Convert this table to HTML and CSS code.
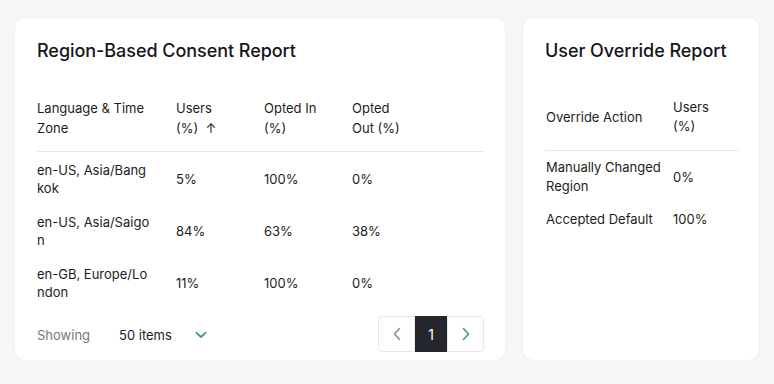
FILE: index.html
```html
<!DOCTYPE html>
<html lang="en">
<head>
<meta charset="utf-8">
<title>Reports</title>
<link rel="stylesheet" href="styles.css">
</head>
<body>
<div class="page">
  <section class="card card-main">
    <h2 class="card-title">Region-Based Consent Report</h2>
    <table class="report report-main">
      <colgroup>
        <col class="c1"><col class="c2"><col class="c3"><col class="c4">
      </colgroup>
      <thead>
        <tr>
          <th><div class="th-wide">Language &amp; Time Zone</div></th>
          <th><div class="th-narrow">Users (%)&nbsp; ↑</div></th>
          <th><div class="th-narrow">Opted In (%)</div></th>
          <th><div class="th-narrow">Opted Out (%)</div></th>
        </tr>
      </thead>
      <tbody>
        <tr><td>en-US, Asia/Bangkok</td><td>5%</td><td>100%</td><td>0%</td></tr>
        <tr><td>en-US, Asia/Saigon</td><td>84%</td><td>63%</td><td>38%</td></tr>
        <tr><td>en-GB, Europe/London</td><td>11%</td><td>100%</td><td>0%</td></tr>
      </tbody>
    </table>
    <div class="footer">
      <div class="showing">
        <span class="showing-label">Showing</span>
        <span class="showing-value">50 items</span>
        <svg class="chev-down" width="12" height="8" viewBox="0 0 12 8"><path d="M1.5 1.8 L6 6 L10.5 1.8" fill="none" stroke="#3c9b79" stroke-width="1.8" stroke-linecap="round" stroke-linejoin="round"/></svg>
      </div>
      <div class="pager">
        <button class="pg pg-prev" aria-label="Previous"><svg width="8" height="14" viewBox="0 0 8 14"><path d="M6.5 1.5 L1.5 7 L6.5 12.5" fill="none" stroke="#8a8d93" stroke-width="1.6" stroke-linecap="round" stroke-linejoin="round"/></svg></button>
        <button class="pg pg-active">1</button>
        <button class="pg pg-next" aria-label="Next"><svg width="8" height="14" viewBox="0 0 8 14"><path d="M1.5 1.5 L6.5 7 L1.5 12.5" fill="none" stroke="#3c9b79" stroke-width="1.6" stroke-linecap="round" stroke-linejoin="round"/></svg></button>
      </div>
    </div>
  </section>
  <section class="card card-side">
    <h2 class="card-title">User Override Report</h2>
    <table class="report report-side">
      <colgroup>
        <col class="s1"><col class="s2">
      </colgroup>
      <thead>
        <tr><th>Override Action</th><th>Users (%)</th></tr>
      </thead>
      <tbody>
        <tr><td>Manually Changed Region</td><td>0%</td></tr>
        <tr><td>Accepted Default</td><td>100%</td></tr>
      </tbody>
    </table>
  </section>
</div>
</body>
</html>
```

FILE: styles.css
```css
* { box-sizing: border-box; }
html, body { margin: 0; padding: 0; }
body {
  background: #f5f6f8;
  font-family: Inter, "Noto Sans", sans-serif;
  color: #1c1d21;
  width: 774px;
  height: 384px;
  overflow: hidden;
}
.page {
  display: flex;
  gap: 18px;
  padding: 18px 15px 0 15px;
  align-items: flex-start;
}
.card {
  background: #ffffff;
  border-radius: 10px;
  height: 342px;
  box-shadow: 0 0 0 1px #f0f1f3;
}
.card-main {
  width: 490px;
  padding: 22px 21px 0 22px;
  display: flex;
  flex-direction: column;
}
.card-side {
  width: 236px;
  padding: 22px 21px 0 22px;
}
.card-title {
  margin: 0;
  font-size: 18px;
  line-height: 22px;
  font-weight: 500;
  letter-spacing: -0.05px;
  color: #15161a;
}
.report {
  border-collapse: collapse;
  table-layout: fixed;
  width: 100%;
  font-size: 13px;
  margin-top: 28px;
}
.report th {
  text-align: left;
  font-weight: 400;
  line-height: 20px;
  padding: 8px 16px 13px 0;
  vertical-align: middle;
  border-bottom: 1px solid #e4e6e9;
}
.th-wide { max-width: 120px; }
.th-narrow { max-width: 56px; }
.report td {
  line-height: 18px;
  padding: 8px 16px 8px 0;
  vertical-align: middle;
  word-break: break-all;
  height: 52px;
}
.report-main td { padding-top: 9px; padding-bottom: 7px; }
.report-main .c1 { width: 139px; }
.report-main .c2 { width: 88px; }
.report-main .c3 { width: 88px; }
.report-main td:first-child { padding-right: 24px; }
.report-side { margin-top: 29px; }
.report-side .s1 { width: 127px; }
.report-side th { line-height: 19px; padding: 7px 16px 14px 1px; }
.report-side td { height: auto; line-height: 19px; padding: 7px 16px 7px 1px; word-break: normal; }
.report-side td:first-child { padding-right: 8px; }
.footer {
  display: flex;
  justify-content: space-between;
  align-items: center;
  margin-top: 8px;
}
.showing {
  display: flex;
  align-items: center;
  font-size: 13px;
  padding-top: 1px;
}
.showing-label { color: #74777d; width: 82px; }
.showing-value { color: #1c1d21; width: 76px; }
.chev-down { margin-top: 1px; }
.pager {
  display: flex;
}
.pg {
  height: 36px;
  border: 1px solid #e6e7ea;
  background: #fff;
  display: flex;
  align-items: center;
  justify-content: center;
  padding: 0;
  font-family: inherit;
  font-size: 14px;
}
.pg-prev { width: 37px; border-radius: 4px 0 0 4px; }
.pg-next { width: 37px; border-radius: 0 4px 4px 0; }
.pg-active {
  width: 32px;
  background: #25262e;
  border-color: #25262e;
  color: #ffffff;
}
```
